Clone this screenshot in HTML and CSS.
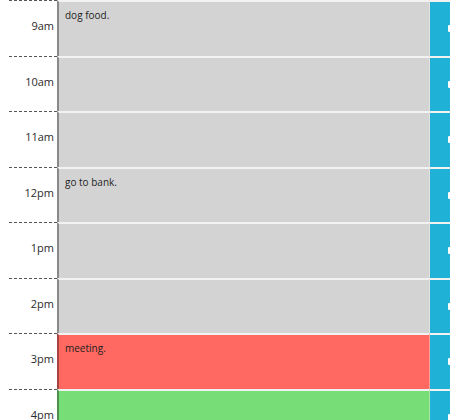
FILE: index.html
```html
<!DOCTYPE html>
<html lang="en">
<head>
<meta charset="utf-8">
<title>Work Day Scheduler</title>
<link rel="stylesheet" href="styles.css">
</head>
<body>
<main class="planner">
  <div class="time-block">
    <div class="hour">9am</div>
    <div class="description past">dog food.</div>
    <div class="save-btn"><span class="save-icon"></span></div>
  </div>
  <div class="time-block">
    <div class="hour">10am</div>
    <div class="description past"></div>
    <div class="save-btn"><span class="save-icon"></span></div>
  </div>
  <div class="time-block">
    <div class="hour">11am</div>
    <div class="description past"></div>
    <div class="save-btn"><span class="save-icon"></span></div>
  </div>
  <div class="time-block">
    <div class="hour">12pm</div>
    <div class="description past">go to bank.</div>
    <div class="save-btn"><span class="save-icon"></span></div>
  </div>
  <div class="time-block">
    <div class="hour">1pm</div>
    <div class="description past"></div>
    <div class="save-btn"><span class="save-icon"></span></div>
  </div>
  <div class="time-block">
    <div class="hour">2pm</div>
    <div class="description past"></div>
    <div class="save-btn"><span class="save-icon"></span></div>
  </div>
  <div class="time-block">
    <div class="hour">3pm</div>
    <div class="description present">meeting.</div>
    <div class="save-btn"><span class="save-icon"></span></div>
  </div>
  <div class="time-block">
    <div class="hour">4pm</div>
    <div class="description future"></div>
    <div class="save-btn"><span class="save-icon"></span></div>
  </div>
</main>
</body>
</html>
```

FILE: styles.css
```css
html, body {
  margin: 0;
  padding: 0;
  background: #ffffff;
  overflow: hidden;
}

body {
  font-family: "Open Sans", "Liberation Sans", sans-serif;
  color: #222222;
}

.planner {
  width: 450px;
}

.time-block {
  display: grid;
  grid-template-columns: 57px 373px 1fr;
  height: 55.5px;
  box-sizing: border-box;
}

.hour {
  margin-left: 9px;
  border-top: 1px dashed #555555;
  font-size: 11px;
  text-align: right;
  padding: 17px 3px 0 0;
  color: #2b2b2b;
}

.description {
  border-top: 2px solid #f2f2f2;
  border-left: 2px solid rgba(0, 0, 0, 0.35);
  border-right: 1px solid rgba(255, 255, 255, 0.35);
  font-size: 10px;
  padding: 6px 0 0 6px;
  color: #1e1e1e;
  white-space: pre-wrap;
}

.past {
  background-color: #d3d3d3;
}

.present {
  background-color: #ff6961;
}

.future {
  background-color: #77dd77;
}

.save-btn {
  background-color: #1fb1d6;
  border-top: 2px solid #f2f2f2;
  overflow: hidden;
  position: relative;
}

.save-icon {
  position: absolute;
  left: 18px;
  top: 23px;
  width: 8px;
  height: 7px;
  background: #ffffff;
  border-radius: 1px;
}
```
